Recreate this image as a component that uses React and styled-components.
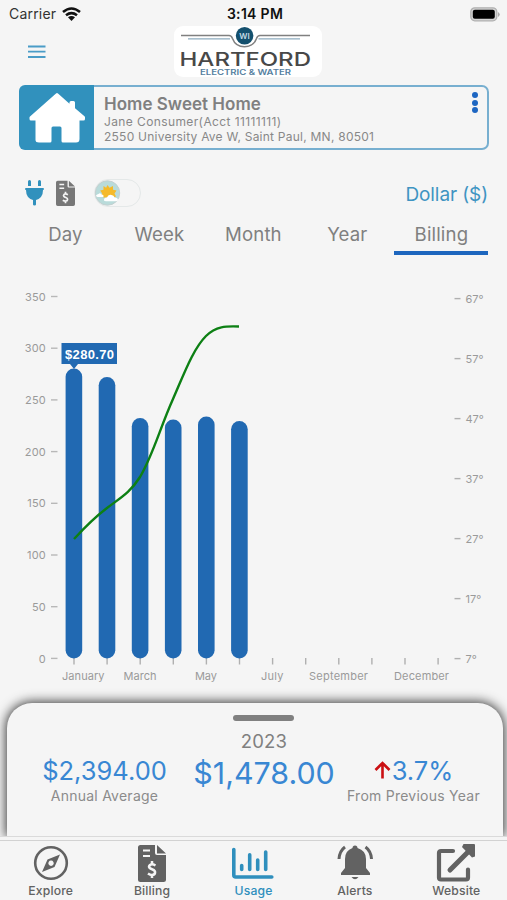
import React from "react";
import styled, { createGlobalStyle } from "styled-components";

const Global = createGlobalStyle`
  * { box-sizing: border-box; }
  body { margin: 0; background: #f5f5f5; font-family: Inter, "Liberation Sans", sans-serif; }
`;

const Screen = styled.main`
  display: flex;
  flex-direction: column;
  width: 507px;
  height: 900px;
  overflow: hidden;
  background: #f5f5f5;
  color: #808080;
`;

const StatusBar = styled.div`
  display: grid;
  grid-template-columns: 1fr auto 1fr;
  align-items: center;
  height: 26px;
  padding: 2px 6px 0 9px;
  color: #333;
  font-size: 14px;
  line-height: 20px;
`;
const Carrier = styled.div`
  display: flex;
  align-items: center;
  gap: 6px;
  letter-spacing: 0.2px;
`;
const Clock = styled.div`
  color: #111;
  font-weight: 600;
  letter-spacing: 0.3px;
`;
const BatteryIcon = styled.svg`
  justify-self: end;
`;

const Header = styled.header`
  display: grid;
  grid-template-columns: 174px 148px 1fr;
  height: 59px;
`;
const MenuButton = styled.button`
  align-self: start;
  width: 18px;
  height: 13px;
  margin: 19px 0 0 28px;
  padding: 0;
  border: 0;
  background: none;
  svg { display: block; }
`;
const Logo = styled.div`
  height: 51px;
  border-radius: 9px;
  background: #fff;
  svg { display: block; }
`;

const AccountCard = styled.section`
  display: flex;
  flex: none;
  width: 470px;
  height: 65px;
  margin-left: 19px;
`;
const HomeTile = styled.div`
  flex: none;
  width: 75px;
  border-radius: 6px 0 0 6px;
  background: #3191bd;
  svg { display: block; }
`;
const AccountDetails = styled.div`
  display: flex;
  flex: 1;
  border: 2px solid #77afd0;
  border-left: 0;
  border-radius: 0 7px 7px 0;
`;
const AccountText = styled.div`
  flex: 1;
  padding: 7px 0 0 10px;
  white-space: nowrap;
`;
const AccountName = styled.div`
  margin-bottom: 1px;
  font-size: 17px;
  font-weight: 600;
  line-height: 20px;
  letter-spacing: 0.02px;
`;
const AccountLine = styled.div`
  color: #888;
  font-size: 12px;
  line-height: 14.5px;
  letter-spacing: ${(p) => p.$track}px;
`;
const MoreButton = styled.button`
  display: flex;
  flex-direction: column;
  gap: 1.7px;
  width: 6px;
  margin: 5px 9px 0 0;
  padding: 0;
  border: 0;
  background: none;
`;
const Dot = styled.i`
  flex: none;
  width: 6px;
  height: 6px;
  border-radius: 50%;
  background: #1d66c2;
`;

const Controls = styled.div`
  display: flex;
  align-items: center;
  height: 60px;
  margin-top: 13px;
  padding: 0 19px 0 25px;
`;
const PlugIcon = styled.svg`
  margin-right: 12px;
`;
const Switch = styled.div`
  width: 47px;
  height: 28px;
  margin-left: 19px;
  border: 1px solid #e4e8e8;
  border-radius: 14px;
  svg { display: block; }
`;
const UnitPicker = styled.div`
  margin: 2px 0 0 auto;
  color: #3f94c2;
  font-size: 19px;
  letter-spacing: -0.1px;
`;

const Tabs = styled.nav`
  display: grid;
  grid-template-columns: repeat(5, 94px);
  flex: none;
  height: 42px;
  margin: -10px 0 0 18.4px;
`;
const Tab = styled.div`
  padding-top: 9px;
  border-bottom: ${(p) => (p.$active ? "4px solid #1d66be" : "4px solid transparent")};
  font-size: 18.6px;
  line-height: 24px;
  letter-spacing: 0.15px;
  text-align: center;
`;

const ChartArea = styled.section`
  flex: none;
  height: 449px;
  svg { display: block; }
`;

const Sheet = styled.section`
  flex: none;
  height: 133px;
  margin: -1px 4px 0 7px;
  padding-top: 12px;
  border-radius: 25px 25px 0 0;
  background: #f5f5f5;
  box-shadow: 0 0 12px 1px rgba(0, 0, 0, 0.8);
`;
const Handle = styled.div`
  width: 61px;
  height: 6px;
  margin: 0 auto 0 226px;
  border-radius: 3px;
  background: #808080;
`;
const SheetYear = styled.div`
  margin: 8px 0 1px;
  padding-left: 18px;
  font-size: 18.5px;
  line-height: 24px;
  letter-spacing: 0.2px;
  text-align: center;
`;
const Stats = styled.div`
  display: grid;
  grid-template-columns: 179px 155px 145px;
  padding-left: 8px;
`;
const Stat = styled.div`
  margin-left: ${(p) => p.$shift || 0}px;
  text-align: center;
`;
const StatValue = styled.div`
  display: flex;
  align-items: center;
  justify-content: center;
  height: 32px;
  margin-top: ${(p) => (p.$large ? 3 : 0)}px;
  color: #3987d3;
  font-size: ${(p) => (p.$large ? 30.4 : 25.5)}px;
`;
const StatLabel = styled.div`
  margin: 0 -10px;
  font-size: 14px;
  line-height: 20px;
  letter-spacing: 0.25px;
  color: #8b8b8b;
  white-space: nowrap;
`;

const NavBar = styled.nav`
  position: relative;
  display: grid;
  grid-template-columns: repeat(5, 1fr);
  flex: none;
  height: 64px;
  border-top: 1px solid #dadada;
  background: #f5f5f5;
  &::before {
    content: "";
    display: block;
    position: absolute;
    inset: 3px 0 auto;
    height: 1px;
    background: #d2d2d2;
  }
`;
const NavItem = styled.div`
  display: flex;
  flex-direction: column;
  align-items: center;
  gap: 1px;
  padding-top: 7px;
  color: ${(p) => (p.$active ? "#2f8fbd" : "#626262")};
  font-size: 12.2px;
  font-weight: 500;
  line-height: 15px;
  letter-spacing: 0.15px;
  svg { display: block; }
`;

function BillIcon({ width, height, color }) {
  return (
    <svg width={width} height={height} viewBox="0 0 28 38" preserveAspectRatio="none">
      <path fill={color} d="M2.500 1h14.500v8q0 2 2 2h9v24.500q0 2.500-2.500 2.500h-23Q0 38 0 35.500v-32Q0 1 2.500 1ZM19 1l9 8.500h-9Z" />
      <path stroke="#f5f5f5" strokeWidth="2" d="M5 6.500h7M5 12h7" />
      <path fill="none" stroke="#f5f5f5" strokeWidth="2.500" d="M17.500 21.500Q14 19.500 12 21C9.500 23.500 12.500 24.800 14.500 25.500C18.500 27 17.500 31 14 31Q12 31 10 29.600M14 17v3.500M14 30.500v3.500" />
    </svg>
  );
}

function WeatherIcon() {
  return (
    <svg width="27" height="26" viewBox="0 0 27 26">
      <circle cx="12.500" cy="13" r="12.200" fill="#b9dbda" stroke="#c4d0d0" />
      <path fill="#f5ba2a" d="m12.500 5 2 2.700L18 6v3.800l3.500.8-2 2.800 1.500 3-3 1H9l-3-1 1.200-3-2-2.800 3.300-.8V6l2.600 1.700Z" />
      <path fill="#fff" d="M9 20.500q-.3-3 3-3 1-3.200 4.500-2.500 2.500.3 3 2.500 3.500 0 3.500 3-1 .8-2.500.8H11q-1.500 0-2-.8ZM1 15.500q1-1.500 2.500-1.500 1.500-1.500 3 .5 2.200-.2 2.200 2Q8 17 7 17H3q-1.500 0-2-1.500Z" />
    </svg>
  );
}

const BARS = [369, 377.5, 418.5, 420, 417, 421.5];
const LEFT_TICKS = [350, 300, 250, 200, 150, 100, 50, 0];
const RIGHT_TICKS = [67, 57, 47, 37, 27, 17, 7];
const MONTHS = [
  ["January", 62, 42.5], ["March", 123.5, 33], ["May", 195, 22],
  ["July", 261, 22.5], ["September", 309, 59], ["December", 394, 55],
];

function BillingChart() {
  return (
    <svg width="507" height="449" viewBox="0 255 507 449" fontFamily="Inter" fontSize="11" fill="#9a9a9a">
      {LEFT_TICKS.map((value, i) => (
        <g key={value}>
          <text x="46" y={300.6 + i * 51.7} textAnchor="end" letterSpacing="0.2">{value}</text>
          <path d={`M51 ${296.5 + i * 51.7}h6.5`} stroke="#b8b8b8" strokeWidth="1.4" />
        </g>
      ))}
      {RIGHT_TICKS.map((value, i) => (
        <g key={value}>
          <path d={`M454.5 ${298.6 + i * 60}h6`} stroke="#b0b0b0" strokeWidth="1.4" />
          <text x="465.5" y={302.9 + i * 60}>{value}°</text>
        </g>
      ))}
      {Array.from({ length: 12 }, (_, i) => (
        <path key={i} d={`M${74 + i * 33.1} 658v6.5`} stroke="#b0b0b0" strokeWidth="1.4" />
      ))}
      {BARS.map((top, i) => (
        <rect key={top} x={65.6 + i * 33.1} y={top - 0.5} width="16.6" height={659 - top} rx="8.3" fill="#2169b2" />
      ))}
      {MONTHS.map(([name, x, width]) => (
        <text key={name} x={x} y="680.3" textLength={width}>{name}</text>
      ))}
      <path d="M74 539C85 527 95 517 107 508C120 498 130 493 140 477C153 455 160 428 173 399C184 374 193 349 206 336C216 326 226 326 239 326.5" fill="none" stroke="#0d8014" strokeWidth="2.4" />
      <path fill="#2169b2" d="M61.5 343h55.5v21H78l-4 5-4-5h-8.500Z" />
      <text x="65" y="358.5" fill="#fff" fontFamily="Liberation Sans" fontSize="13" fontWeight="700" textLength="49">$280.70</text>
    </svg>
  );
}

export default function App() {
  return (
    <>
      <Global />
      <Screen>
        <StatusBar>
          <Carrier>
            Carrier
            <svg width="19" height="14" viewBox="0 0 19 14" fill="none" stroke="#111" strokeWidth="2.6">
              <path d="M1 5Q9.500-2 18 5M4 8.200Q9.500 4 15 8.200" />
              <path fill="#111" stroke="none" d="M6 10.300Q9.500 7.500 13 10.300L9.500 14Z" />
            </svg>
          </Carrier>
          <Clock>3:14 PM</Clock>
          <BatteryIcon width="31" height="15" viewBox="0 0 31 15">
            <rect x=".8" y=".8" width="26" height="13" rx="4" fill="#d4d4d4" stroke="#b0b0b0" strokeWidth="1.3" />
            <rect x="2.800" y="2.800" width="22" height="9" rx="2" fill="#000" />
            <path d="M28 5q3.500 2.500 0 5Z" fill="#aaa" />
          </BatteryIcon>
        </StatusBar>

        <Header>
          <MenuButton aria-label="Menu">
            <svg width="18" height="13" viewBox="0 0 18 13">
              <path d="M0 1.500h17.500M0 6.700h17.500M0 12h17.500" stroke="#4a9cc7" strokeWidth="1.800" />
            </svg>
          </MenuButton>
          <Logo>
            <svg width="148" height="51" viewBox="174 26 148 51">
              <path d="M181 35.500h48q2.500 0 3.500 3c4 11 20 11 24 0q1-3 3.500-3h50" fill="none" stroke="#808080" strokeWidth="1.500" />
              <path d="M188 38.800h42M258.500 38.800h41.500" stroke="#8dacbf" strokeWidth="1.300" />
              <circle cx="244.600" cy="35.800" r="8.800" fill="#14506e" />
              <text x="239.300" y="38.800" fill="#c5dbe5" fontFamily="Inter" fontSize="8" fontWeight="600" textLength="10.500">WI</text>
              <text x="179.500" y="65.500" fill="#484848" fontFamily="Inter" fontSize="19.300" fontWeight="500" textLength="131.500" lengthAdjust="spacingAndGlyphs">HARTFORD</text>
              <text x="200" y="75.200" fill="#5580a0" fontFamily="Inter" fontSize="7.300" fontWeight="600" textLength="91" lengthAdjust="spacingAndGlyphs">ELECTRIC &amp; WATER</text>
            </svg>
          </Logo>
        </Header>

        <AccountCard>
          <HomeTile>
            <svg width="75" height="65" viewBox="19 85 75 65">
              <path fill="#fff" stroke="#fff" strokeWidth="3" strokeLinejoin="round" d="M57 94.500 31 117.500v1.500h6v21q0 1 2 1h11v-13q0-3 3-3h7q3 0 3 3v13h13q2 0 2-2v-20h5.500v-1.500l-10-8.500v-6.500h-2.500v4.500Z" />
            </svg>
          </HomeTile>
          <AccountDetails>
            <AccountText>
              <AccountName>Home Sweet Home</AccountName>
              <AccountLine $track={0.39}>Jane Consumer(Acct 11111111)</AccountLine>
              <AccountLine $track={0.24}>2550 University Ave W, Saint Paul, MN, 80501</AccountLine>
            </AccountText>
            <MoreButton aria-label="More"><Dot /><Dot /><Dot /></MoreButton>
          </AccountDetails>
        </AccountCard>

        <Controls>
          <PlugIcon width="19" height="26" viewBox="0 0 19 26" fill="#3191bd">
            <path d="M3 1.500Q3 0 4.500 0T6 1.500V6H3ZM13 1.500Q13 0 14.500 0T16 1.500V6h-3ZM1 8h17q1 0 1 1t-1 1q0 8-7 10v4.500q0 1-1.500 1T8 24.500V20q-7-2-7-10-1 0-1-1t1-1Z" />
          </PlugIcon>
          <BillIcon width={19} height={26} color="#777" />
          <Switch><WeatherIcon /></Switch>
          <UnitPicker>Dollar ($)</UnitPicker>
        </Controls>

        <Tabs>
          {["Day", "Week", "Month", "Year", "Billing"].map((name) => (
            <Tab key={name} $active={name === "Billing"}>{name}</Tab>
          ))}
        </Tabs>

        <ChartArea><BillingChart /></ChartArea>

        <Sheet>
          <Handle />
          <SheetYear>2023</SheetYear>
          <Stats>
            <Stat>
              <StatValue>$2,394.00</StatValue>
              <StatLabel>Annual Average</StatLabel>
            </Stat>
            <Stat $shift={-15}><StatValue $large>$1,478.00</StatValue></Stat>
            <Stat $shift={-16}>
              <StatValue>
                <svg width="18" height="20" viewBox="0 0 18 20">
                  <path d="M8.500 18.500V3M1.500 10l7-7 7 7" fill="none" stroke="#cb1013" strokeWidth="2.600" />
                </svg>
                3.7%
              </StatValue>
              <StatLabel>From Previous Year</StatLabel>
            </Stat>
          </Stats>
        </Sheet>

        <NavBar>
          <NavItem>
            <svg width="36" height="38" viewBox="0 0 36 38" fill="none" stroke="currentColor">
              <circle cx="18" cy="19" r="15.800" strokeWidth="2.600" />
              <path fill="currentColor" stroke="none" fillRule="evenodd" d="m27 10.500-5.500 12.500L9 28l5.500-12.500Zm-9 6a2.700 2.700 0 1 0 .1 0Z" />
            </svg>
            Explore
          </NavItem>
          <NavItem><BillIcon width={28} height={38} color="#626262" />Billing</NavItem>
          <NavItem $active>
            <svg width="44" height="38" viewBox="0 0 44 38" fill="none" stroke="currentColor" strokeWidth="3.600" strokeLinecap="round">
              <path d="M2.800 5.500V31q0 2 2 2h36M10.700 21.500v4M18.700 10.800v14.700M26.700 16v9.500M34.700 8v17.500" />
            </svg>
            Usage
          </NavItem>
          <NavItem>
            <svg width="36" height="38" viewBox="0 0 36 38" fill="currentColor">
              <path d="M18 1.500q2.500 0 2.500 2.500Q29 6.500 29 15v9l4 5v2H4v-2l4-5v-9q0-8.500 7.500-11 0-2.500 2.500-2.500ZM14.500 33h7q-3.500 4.500-7 0Z" />
              <path fill="none" stroke="currentColor" strokeWidth="3" d="M2 15Q2.500 7 8 3M34.500 15q-.5-8-6-12" />
            </svg>
            Alerts
          </NavItem>
          <NavItem>
            <svg width="40" height="38" viewBox="0 0 40 38" fill="none" stroke="currentColor" strokeWidth="4.200">
              <path strokeLinecap="round" d="M17 7H5q-2 0-2 2v24.500q0 2 2 2h25q2 0 2-2v-8" />
              <path strokeWidth="5" strokeLinecap="round" d="M14 26 34 6" />
              <path fill="currentColor" stroke="none" d="M27.500 0H38q1 0 1 1v11.500l-3 1L26 3Z" />
            </svg>
            Website
          </NavItem>
        </NavBar>
      </Screen>
    </>
  );
}
